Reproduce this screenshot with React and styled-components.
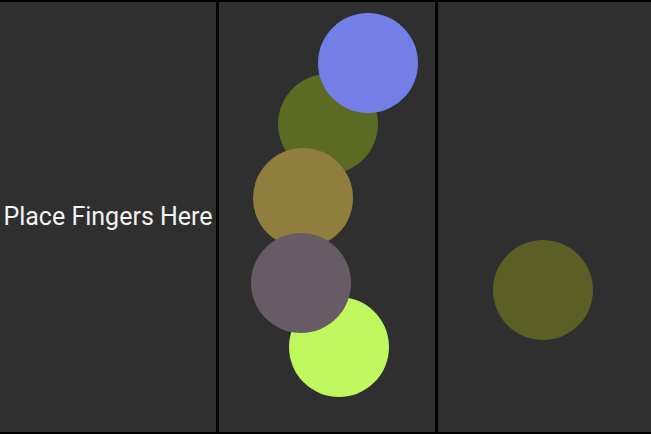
import React from "react";
import styled, { createGlobalStyle } from "styled-components";

const GlobalStyle = createGlobalStyle`
  html, body { margin: 0; padding: 0; background: #000; }
  body { font-family: Roboto, "Noto Sans", sans-serif; }
`;

const Screen = styled.div`
  box-sizing: border-box;
  width: 651px;
  height: 434px;
  padding: 2px 0 2px 0;
  background: #000;
  display: grid;
  grid-template-columns: 216px 216px 1fr;
  column-gap: 3px;
`;

const Panel = styled.div`
  position: relative;
  background: #2f2f2f;
  overflow: hidden;
  display: flex;
  align-items: center;
  justify-content: center;
`;

const Prompt = styled.span`
  color: #f2f2f2;
  font-family: Roboto, sans-serif;
  font-size: 25px;
  white-space: nowrap;
  margin-bottom: 2px;
`;

const Touch = styled.div`
  position: absolute;
  width: 100px;
  height: 100px;
  border-radius: 50%;
  background: ${(p) => p.$color};
`;

const middleTouches = [
  { id: 1, x: 59, y: 72, color: "#5c6b23" },
  { id: 2, x: 99, y: 11, color: "#737ee6" },
  { id: 3, x: 34, y: 146, color: "#8f7e3e" },
  { id: 4, x: 70, y: 295, color: "#c0f65e" },
  { id: 5, x: 32, y: 231, color: "#695b66" },
];

const rightTouches = [{ id: 1, x: 55, y: 238, color: "#5b5e25" }];

function TouchLayer({ touches }) {
  return touches.map((t) => (
    <Touch key={t.id} $color={t.color} style={{ left: t.x, top: t.y }} />
  ));
}

export default function App() {
  return (
    <>
      <GlobalStyle />
      <Screen>
        <Panel>
          <Prompt>Place Fingers Here</Prompt>
        </Panel>
        <Panel>
          <TouchLayer touches={middleTouches} />
        </Panel>
        <Panel>
          <TouchLayer touches={rightTouches} />
        </Panel>
      </Screen>
    </>
  );
}
